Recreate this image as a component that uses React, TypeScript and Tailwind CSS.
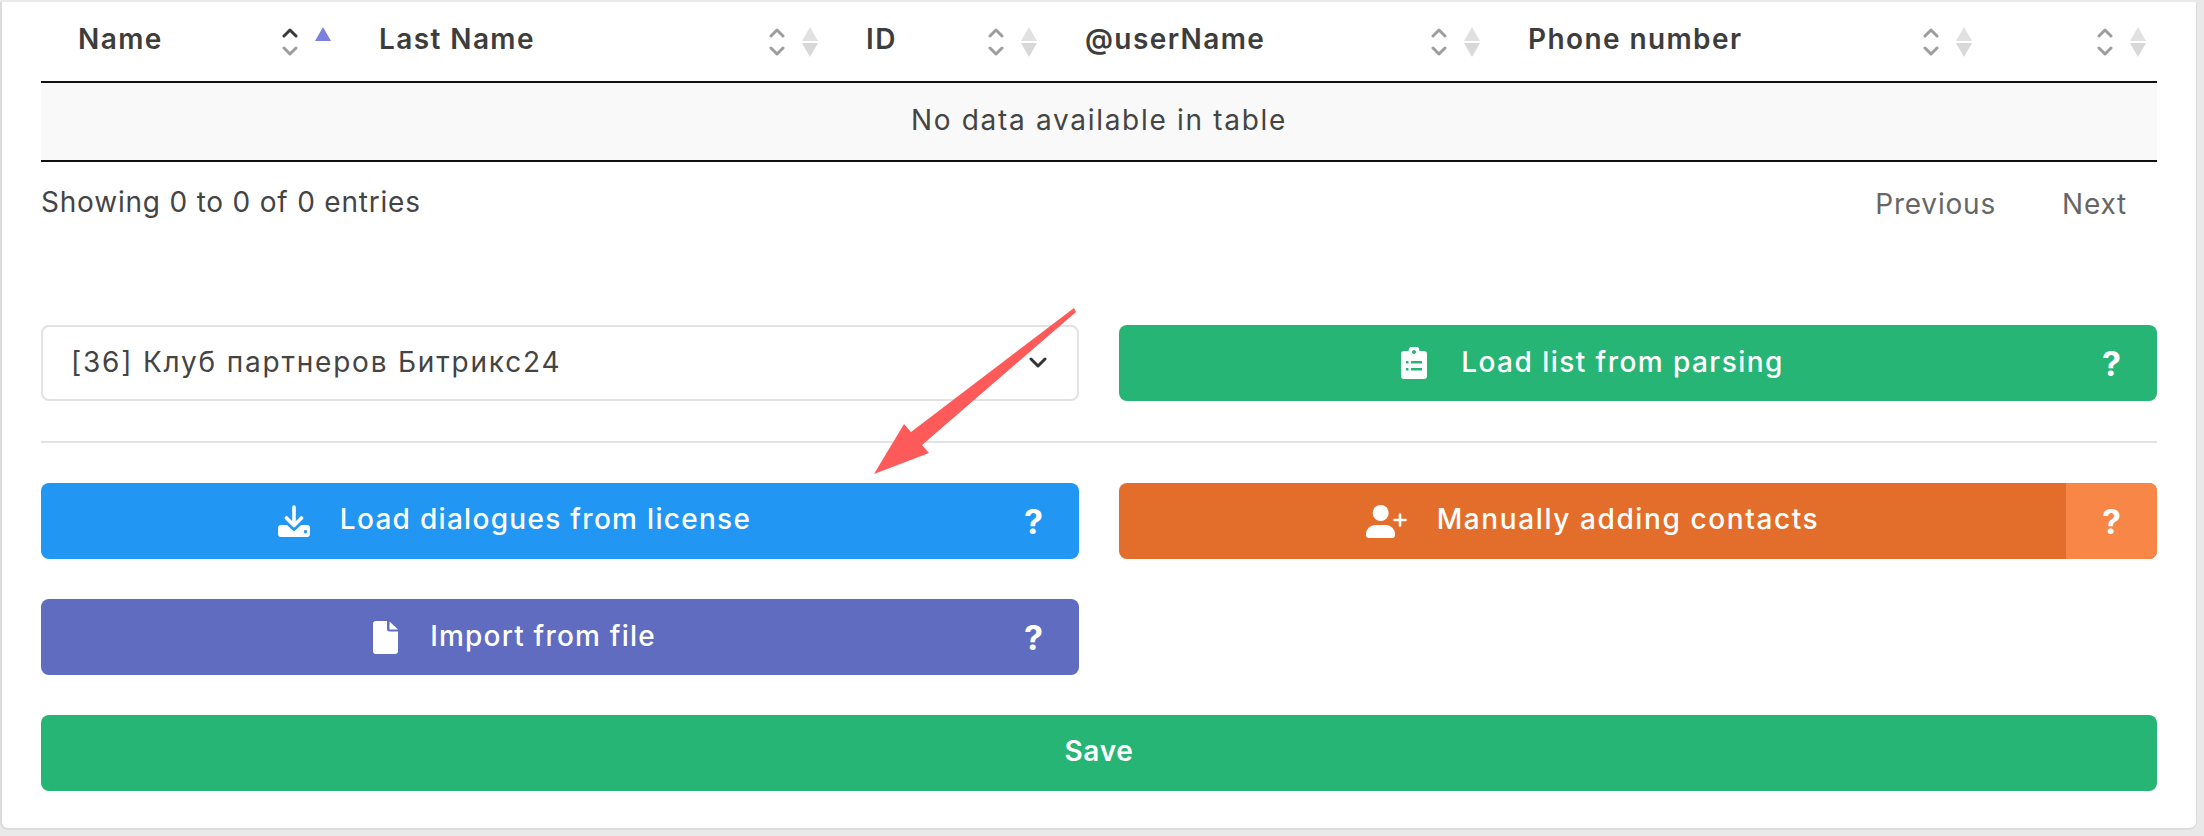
import type { ReactNode } from "react";

// ── Table header ──────────────────────────────────────────────────────────────

const COLUMNS = [
  { title: "Name", sorted: true },
  { title: "Last Name", sorted: false },
  { title: "ID", sorted: false },
  { title: "@userName", sorted: false },
  { title: "Phone number", sorted: false },
  { title: "", sorted: false },
];

function SortIcons({ sorted }: { sorted: boolean }) {
  return (
    <div className="flex items-start gap-[17px] shrink-0">
      <svg width="16" height="30" viewBox="0 0 16 30" fill="none" strokeWidth="3" strokeLinecap="round" strokeLinejoin="round">
        <path d="M2 9 L8 3 L14 9" stroke={sorted ? "#3a3a3a" : "#9d9d9d"} />
        <path d="M2 21 L8 27 L14 21" stroke="#9d9d9d" />
      </svg>
      {sorted ? (
        <svg width="16" height="30" viewBox="0 0 16 30">
          <path d="M8 0 L16 14 L0 14 Z" fill="#7a80de" />
        </svg>
      ) : (
        <svg width="16" height="30" viewBox="0 0 16 30">
          <path d="M8 0 L16 14 L0 14 Z" fill="#e1e1e1" />
          <path d="M8 30 L16 16 L0 16 Z" fill="#d8d8d8" />
        </svg>
      )}
    </div>
  );
}

// ── Icons ─────────────────────────────────────────────────────────────────────

function ClipboardIcon() {
  return (
    <svg width="26" height="32" viewBox="0 0 26 32" fill="currentColor" fillRule="evenodd">
      <path d="M3 4 H7.5 A5.5 5.5 0 0 1 18.5 4 H23 A3 3 0 0 1 26 7 V29 A3 3 0 0 1 23 32 H3 A3 3 0 0 1 0 29 V7 A3 3 0 0 1 3 4 Z M13 3 a2 2 0 1 0 0.01 0 Z M10 14 H21 V16.5 H10 Z M10 21 H21 V23.5 H10 Z M5 14 h2.5 v2.5 h-2.5 Z M5 21 h2.5 v2.5 h-2.5 Z" />
    </svg>
  );
}

function DownloadIcon() {
  return (
    <svg width="32" height="32" viewBox="0 0 32 32" fill="none">
      <path d="M16 2 V20 M8.5 13 L16 20.5 L23.5 13" stroke="currentColor" strokeWidth="3.6" strokeLinecap="round" strokeLinejoin="round" />
      <path
        fill="currentColor"
        fillRule="evenodd"
        d="M3 20 H9 L16 26.5 L23 20 H29 A3 3 0 0 1 32 23 V29 A3 3 0 0 1 29 32 H3 A3 3 0 0 1 0 29 V23 A3 3 0 0 1 3 20 Z M27.5 25 a1.7 1.7 0 1 0 0.01 0 Z"
      />
    </svg>
  );
}

function UserPlusIcon() {
  return (
    <svg width="41" height="33" viewBox="0 0 41 33" fill="currentColor">
      <circle cx="14.7" cy="8" r="8" />
      <path d="M9 20 H20 A9 9 0 0 1 29 29 V30 A3 3 0 0 1 26 33 H3 A3 3 0 0 1 0 30 V29 A9 9 0 0 1 9 20 Z" />
      <path d="M34 9.5 V20.5 M28.5 15 H39.5" stroke="currentColor" strokeWidth="2.6" strokeLinecap="round" />
    </svg>
  );
}

function FileIcon() {
  return (
    <svg width="25" height="33" viewBox="0 0 25 33" fill="currentColor">
      <path d="M3 0 H14 V8 A2.5 2.5 0 0 0 16.5 10.5 H25 V30 A3 3 0 0 1 22 33 H3 A3 3 0 0 1 0 30 V3 A3 3 0 0 1 3 0 Z" />
      <path d="M16.5 0.5 L25 8.5 H16.5 Z" />
    </svg>
  );
}

// ── Action button with help section on the right ──────────────────────────────

function ActionButton({
  icon,
  label,
  className,
  labelClassName,
  helpClassName,
}: {
  icon: ReactNode;
  label: string;
  className: string;
  labelClassName: string;
  helpClassName?: string;
}) {
  return (
    <button className={`flex h-[76px] w-full overflow-hidden rounded-lg text-white ${className}`}>
      <span className="flex flex-1 items-center justify-center gap-[30px] text-[28px] font-medium">
        {icon}
        <span className={`-mt-[3px] ${labelClassName}`}>{label}</span>
      </span>
      <span className={`flex w-[91px] items-center justify-center text-[34px] font-bold ${helpClassName ?? ""}`}>?</span>
    </button>
  );
}

export default function App() {
  return (
    <div className="h-[836px] w-[2204px] bg-[#e9e9e9] pr-[7px] pb-[6px] pt-[2px] font-['Inter',sans-serif] text-[#444444]">
      <div className="relative h-full rounded-br-lg rounded-bl-lg border-l-2 border-r border-b-2 border-[#dcdcdc] bg-white pl-[39px] pr-[39px]">
        {/* Table */}
        <div className="grid h-[81px] grid-cols-[301px_487px_219px_443px_492px_174px] border-b-2 border-[#111111]">
          {COLUMNS.map((col, i) => (
            <div key={i} className="flex items-center justify-between pl-[37px] pr-[11px]">
              <span className="-mt-[5px] text-[28px] font-semibold tracking-[1.4px] text-[#3d3d3d]">{col.title}</span>
              <SortIcons sorted={col.sorted} />
            </div>
          ))}
        </div>
        <div className="flex h-[79px] items-center justify-center border-b-2 border-[#111111] bg-[#f9f9f9] text-[28px] tracking-[1.7px]">
          <span className="-mt-[4px]">No data available in table</span>
        </div>

        {/* Footer of the table */}
        <div className="flex h-[163px] items-start justify-between pt-[19px]">
          <span className="text-[28px] tracking-[0.8px]">Showing 0 to 0 of 0 entries</span>
          <div className="flex gap-[66px] pr-[30px] pt-[2px] text-[28px] tracking-[0.8px] text-[#666666]">
            <span>Previous</span>
            <span>Next</span>
          </div>
        </div>

        {/* Group select + parsing */}
        <div className="grid grid-cols-2 gap-x-[40px]">
          <div className="flex h-[76px] items-center justify-between rounded-lg border-2 border-[#e2e2e2] pl-[28px] pr-[30px] text-[28px] tracking-[1.8px]">
            <span className="-mt-[3px]">[36] Клуб партнеров Битрикс24</span>
            <svg width="18" height="12" viewBox="0 0 18 12" fill="none" stroke="#333333" strokeWidth="3" strokeLinecap="round" strokeLinejoin="round">
              <path d="M2 2 L9 9 L16 2" />
            </svg>
          </div>
          <ActionButton icon={<ClipboardIcon />} label="Load list from parsing" className="bg-[#26b574]" labelClassName="ml-[4px] tracking-[1.45px]" />
        </div>

        <div className="my-[40px] h-[2px] bg-[#e2e2e2]" />

        <div className="grid grid-cols-2 gap-x-[40px] gap-y-[40px]">
          <ActionButton icon={<DownloadIcon />} label="Load dialogues from license" className="bg-[#2196f3]" labelClassName="-translate-y-[1px] tracking-[1.3px]" />
          <ActionButton
            icon={<UserPlusIcon />}
            label="Manually adding contacts"
            className="bg-[#e36e2b]"
            labelClassName="-translate-y-[1px] tracking-[1.6px]"
            helpClassName="bg-[#f78647]"
          />
          <ActionButton icon={<FileIcon />} label="Import from file" className="bg-[#5f6cc0]" labelClassName="ml-[2px] tracking-[1.2px]" />
        </div>

        <button className="mt-[40px] flex h-[76px] w-full items-center justify-center rounded-lg bg-[#26b574] text-[28px] font-semibold tracking-[0.7px] text-white">
          <span className="-mt-[4px]">Save</span>
        </button>

        {/* Screenshot annotation arrow */}
        <svg className="absolute left-[836px] top-[300px]" width="250" height="190" viewBox="0 0 250 190">
          <path d="M236 6 L73 130 L66 122 L36 172 L91 151 L84 143 L238 10 Z" fill="#ff5a5a" />
        </svg>
      </div>
    </div>
  );
}
